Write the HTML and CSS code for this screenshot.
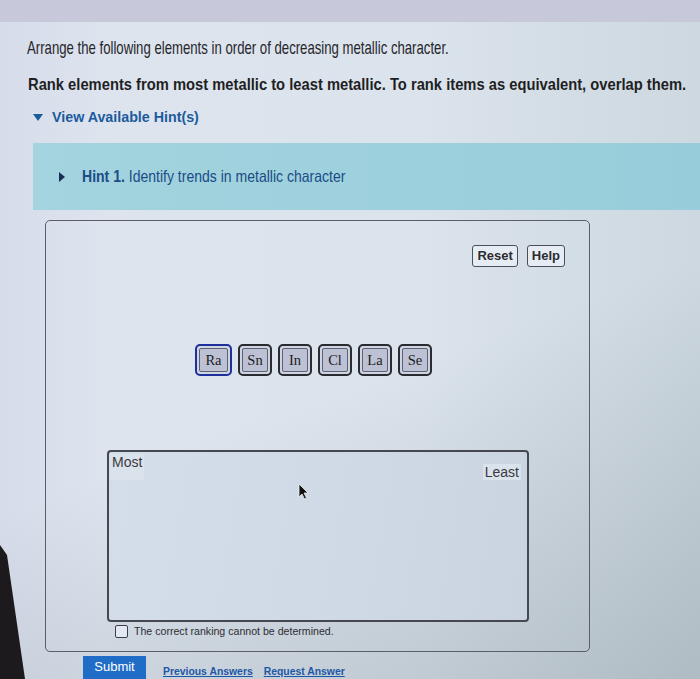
FILE: index.html
```html
<!DOCTYPE html>
<html lang="en">
<head>
<meta charset="utf-8">
<title>Ranking</title>
<link rel="stylesheet" href="styles.css">
</head>
<body>
<div class="topband"></div>
<main class="page">
  <p class="q">Arrange the following elements in order of decreasing metallic character.</p>
  <p class="rank">Rank elements from most metallic to least metallic. To rank items as equivalent, overlap them.</p>
  <div class="hint-toggle"><span class="tri-down"></span><span class="ht-text">View Available Hint(s)</span></div>
  <div class="hint-band"><span class="tri-right"></span><span class="hb-text"><b>Hint 1.</b> Identify trends in metallic character</span></div>
  <section class="card">
    <div class="tools">
      <span class="btn">Reset</span>
      <span class="btn">Help</span>
    </div>
    <div class="tiles">
      <span class="tile sel"><span class="tin">Ra</span></span>
      <span class="tile"><span class="tin">Sn</span></span>
      <span class="tile"><span class="tin">In</span></span>
      <span class="tile"><span class="tin">Cl</span></span>
      <span class="tile"><span class="tin">La</span></span>
      <span class="tile"><span class="tin">Se</span></span>
    </div>
    <div class="rankbox">
      <div class="labels"><span class="lbl">Most</span><span class="lbl least">Least</span></div>
      <svg class="cursor" width="11" height="17" viewBox="0 0 11 17"><path d="M1 1 L1 14 L4 11 L6.5 16 L8.5 15 L6 10 L10 10 Z" fill="#111" stroke="#eee" stroke-width="0.8"/></svg>
    </div>
    <label class="cant"><span class="box"></span><span class="cant-text">The correct ranking cannot be determined.</span></label>
  </section>
  <div class="actions">
    <span class="submit">Submit</span>
    <a class="lnk">Previous Answers</a>
    <a class="lnk">Request Answer</a>
  </div>
</main>
</body>
</html>
```
FILE: styles.css
```css
html, body { margin: 0; padding: 0; }
body {
  width: 700px;
  height: 679px;
  overflow: hidden;
  position: relative;
  font-family: "Liberation Sans", Arial, sans-serif;
  background:
    linear-gradient(160deg, rgba(255,255,255,0) 55%, rgba(120,135,140,0.35) 100%),
    linear-gradient(90deg, #d6dcea 0%, #dde4ee 15%, #dbe3ec 60%, #cdd8e0 100%);
}
body::before {
  content: "";
  position: absolute;
  left: 0; top: 0;
  width: 30px; height: 679px;
  background: #1d1a1e;
  clip-path: polygon(0 545px, 7px 555px, 25px 679px, 0 679px);
}
.topband { height: 22px; background: #c7c9db; }
.page { padding-left: 27px; }
.q {
  margin: 16px 0 0;
  font-size: 18.5px;
  line-height: 20px;
  color: #26262b;
  white-space: nowrap;
  transform: scaleX(0.712);
  transform-origin: left center;
}
.rank {
  margin: 16px 0 0 1px;
  font-size: 16.5px;
  line-height: 20px;
  font-weight: bold;
  color: #1f1f24;
  white-space: nowrap;
  transform: scaleX(0.893);
  transform-origin: left center;
}
.hint-toggle {
  margin: 13px 0 0 6px;
  height: 20px;
  display: flex;
  align-items: center;
  gap: 9px;
  color: #1b5b9d;
  font-weight: bold;
  font-size: 15.5px;
}
.ht-text { display: inline-block; transform: scaleX(0.92); transform-origin: left center; }
.tri-down {
  width: 0; height: 0;
  border-left: 5px solid transparent;
  border-right: 5px solid transparent;
  border-top: 7px solid #1b5b9d;
}
.hint-band {
  margin: 16px 0 0 6px;
  height: 67px;
  background: linear-gradient(90deg, #a3d4df, #97cdda);
  display: flex;
  align-items: center;
  padding-left: 26px;
  gap: 17px;
  color: #1a4c86;
  font-size: 16.5px;
}
.hb-text { display: inline-block; white-space: nowrap; transform: scaleX(0.85); transform-origin: left center; }
.tri-right {
  width: 0; height: 0;
  border-top: 5px solid transparent;
  border-bottom: 5px solid transparent;
  border-left: 6px solid #1a2e55;
}
.card {
  margin: 10px 0 0 18px;
  width: 545px;
  height: 432px;
  box-sizing: border-box;
  border: 1px solid #5a5e66;
  border-radius: 5px;
  position: relative;
}
.tools {
  display: flex;
  justify-content: flex-end;
  gap: 9px;
  padding: 24px 24px 0 0;
}
.btn {
  height: 22px;
  padding: 0 4px;
  box-sizing: border-box;
  border: 1px solid #4b4f57;
  border-radius: 3px;
  background: #e6ecf3;
  font-weight: bold;
  font-size: 13px;
  line-height: 20px;
  color: #2c2c32;
}
.tiles {
  display: flex;
  gap: 6px;
  margin: 77px 0 0 149px;
}
.tile {
  width: 34px;
  height: 32px;
  box-sizing: border-box;
  border: 2px solid #2a2b30;
  border-radius: 5px;
  padding: 2px;
  background: #cfd4e2;
  display: flex;
}
.tile.sel { border-color: #1f2f9c; width: 37px; }
.tin {
  flex: 1;
  border: 1px solid #5d6172;
  border-radius: 2px;
  background: #bcc1d4;
  font-family: "Liberation Serif", "Times New Roman", serif;
  font-size: 14.5px;
  line-height: 22px;
  text-align: center;
  color: #1c1c22;
}
.rankbox {
  position: relative;
  margin: 74px 0 0 61px;
  width: 422px;
  height: 172px;
  box-sizing: border-box;
  border: 2px solid #45484f;
  border-radius: 4px;
  background: linear-gradient(100deg, #d4dde9, #cfd9e6 60%, #c9d4e0);
}
.labels { display: flex; justify-content: space-between; padding: 2px 6px 0 1px; }
.lbl {
  font-size: 14px;
  line-height: 16px;
  color: #3a3a40;
  background: #dae2ec;
  padding: 0 2px;
}
.least { margin-top: 10px; }
.cursor { position: absolute; left: 189px; top: 31px; }
.cant {
  display: flex;
  align-items: center;
  gap: 6px;
  margin: 2px 0 0 69px;
  height: 14px;
}
.box {
  width: 11px; height: 11px;
  border: 1px solid #3d4048;
  border-radius: 2px;
  background: #e3e9f1;
}
.cant-text {
  font-size: 10.6px;
  color: #2d2d33;
}
.actions {
  display: flex;
  align-items: flex-start;
  margin: 4px 0 0 56px;
  gap: 17px;
}
.submit {
  width: 63px;
  height: 24px;
  background: #1f6dc6;
  color: #fff;
  font-size: 13px;
  line-height: 22px;
  text-align: center;
}
.lnk {
  margin-top: 9px;
  font-weight: bold;
  font-size: 10.4px;
  line-height: 13px;
  color: #1d58a6;
  text-decoration: underline;
}
.lnk + .lnk { margin-left: -6px; }
```
